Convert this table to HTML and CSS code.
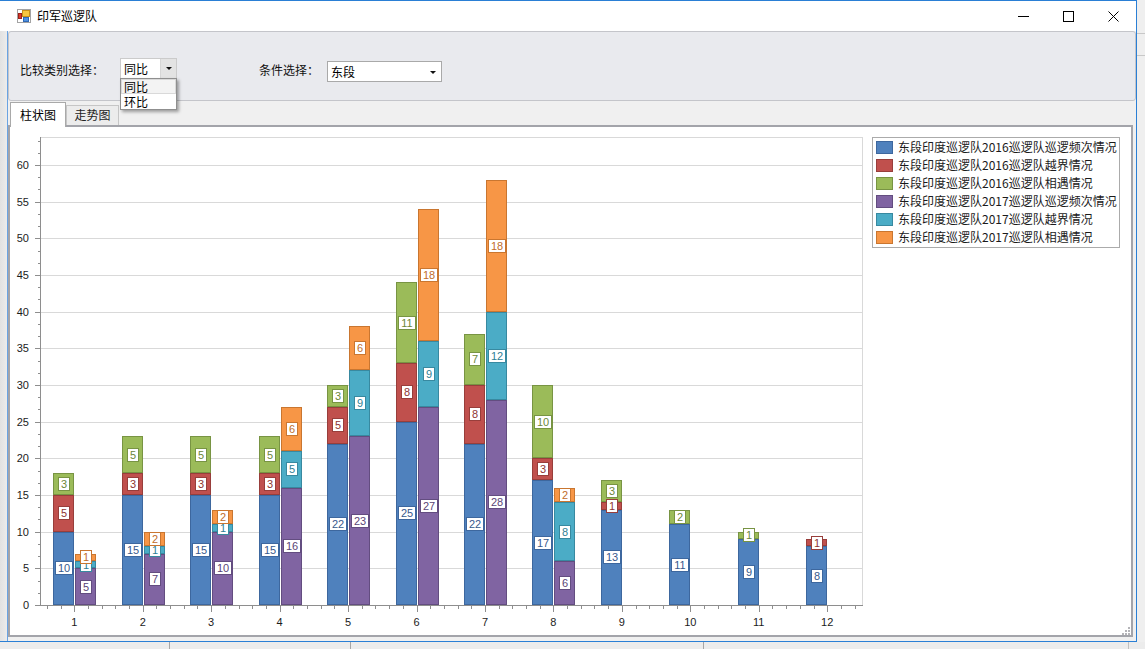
FILE: index.html
```html
<!DOCTYPE html>
<html lang="zh-CN">
<head>
<meta charset="utf-8">
<title>印军巡逻队</title>
<link rel="stylesheet" href="styles.css">
</head>
<body>
<div class="screen">
  <div class="top-row">
    <div class="window">
      <div class="titlebar">
        <svg class="app-icon" viewBox="0 0 14 14" width="14" height="14">
          <rect x="0.5" y="0.5" width="13" height="13" fill="#fff" stroke="#a3a3a3"/>
          <rect x="5.5" y="1.5" width="7" height="6" fill="#f7c640" stroke="#c8901a"/>
          <rect x="1.5" y="4.5" width="3" height="5" fill="#d93a2c" stroke="#9c2018"/>
          <rect x="6.5" y="8.5" width="5" height="4" fill="#4f92e2" stroke="#2f68b5"/>
        </svg>
        <span class="title">印军巡逻队</span>
        <div class="controls">
          <span class="ctl"><svg width="11" height="11" viewBox="0 0 11 11"><rect x="0" y="5" width="11" height="1" fill="#000"/></svg></span>
          <span class="ctl"><svg width="11" height="11" viewBox="0 0 11 11"><rect x="0.5" y="0.5" width="10" height="10" fill="none" stroke="#000"/></svg></span>
          <span class="ctl"><svg width="11" height="11" viewBox="0 0 11 11"><path d="M0.5 0.5 L10.5 10.5 M10.5 0.5 L0.5 10.5" stroke="#000" stroke-width="1" fill="none"/></svg></span>
        </div>
      </div>
      <div class="client">
        <div class="gutter"></div>
        <div class="main">
          <div class="panel">
            <span class="lbl lbl-type">比较类别选择：</span>
            <div class="combo combo-type">
              <span class="combo-text">同比</span>
              <span class="combo-btn"><i class="arrow"></i></span>
              <ul class="dropdown">
                <li class="item hot">同比</li>
                <li class="item">环比</li>
              </ul>
            </div>
            <span class="lbl lbl-cond">条件选择：</span>
            <div class="combo combo-cond">
              <span class="combo-text">东段</span>
              <i class="arrow"></i>
            </div>
          </div>
          <div class="tabs">
            <div class="tabstrip">
              <div class="tab active">柱状图</div>
              <div class="tab">走势图</div>
            </div>
            <div class="tabpage">
              <svg id="chart" class="chart" width="1121" height="508" viewBox="10 127 1121 508"></svg>
            </div>
          </div>
        </div>
      </div>
    </div>
    <div class="side-strip"><div class="side-lines"></div></div>
  </div>
  <div class="bottom-row">
    <div class="cell w1"></div>
    <div class="cell w2"></div>
    <div class="cell w3"></div>
    <div class="cell w4"></div>
    <div class="cell w5"></div>
  </div>
</div>
<script src="script.js"></script>
</body>
</html>
```

FILE: styles.css
```css
* { box-sizing: border-box; }
html, body { margin: 0; padding: 0; }
body {
  width: 1145px;
  height: 649px;
  overflow: hidden;
  background: #ededed;
  font-family: "Noto Sans CJK SC", "Noto Sans", sans-serif;
  font-size: 12px;
  color: #000;
}
.screen {
  width: 1145px;
  height: 649px;
  display: flex;
  flex-direction: column;
  background: #ededed;
}
.top-row { display: flex; height: 642px; flex: none; }
.window {
  width: 1137px;
  height: 642px;
  flex: none;
  border-top: 1px solid #2a7fd5;
  border-right: 1px solid #2a7fd5;
  border-bottom: 1px solid #2a7fd5;
  background: #f0f0f0;
  display: flex;
  flex-direction: column;
  box-shadow: 0 2px 4px rgba(0,0,0,0.12);
}
.titlebar {
  height: 30px;
  flex: none;
  background: #fff;
  display: flex;
  align-items: center;
}
.app-icon { margin-left: 17px; margin-right: 6px; flex: none; display: block; }
.title { font-size: 12px; line-height: 16px; color: #000; }
.controls { margin-left: auto; display: flex; height: 30px; }
.ctl {
  width: 45px;
  height: 30px;
  display: flex;
  align-items: center;
  justify-content: center;
}
.ctl svg { display: block; }

.client { flex: 1; display: flex; min-height: 0; }
.gutter {
  width: 8px;
  flex: none;
  background: linear-gradient(to right, #e2e2e2, #ececec);
  border-right: 1px solid #6aa3e2;
}
.main { flex: 1; display: flex; flex-direction: column; min-width: 0; }

.panel {
  height: 70px;
  flex: none;
  background: #e9eaee;
  border: 1px solid #c4c5ca;
  border-radius: 3px;
  display: flex;
  align-items: flex-start;
  padding-left: 11px;
  position: relative;
  z-index: 3;
}
.lbl { font-size: 12px; line-height: 20px; white-space: nowrap; color: #111; }
.lbl-type { margin-top: 28px; width: 84px; }
.lbl-cond { margin-top: 28px; margin-left: 82px; width: 60px; }

.combo {
  position: relative;
  display: flex;
  align-items: stretch;
  background: #fff;
  height: 21px;
  font-size: 12px;
}
.combo-text { line-height: 19px; padding-left: 3px; flex: 1; color: #000; }
.combo-type {
  margin-top: 26px;
  margin-left: 16px;
  width: 57px;
  border: 1px solid #cbcbcb;
}
.combo-btn {
  width: 16px;
  background: #e3e3e3;
  border-left: 1px solid #d6d6d6;
  display: flex;
  align-items: center;
  justify-content: center;
}
.arrow {
  display: block;
  width: 0;
  height: 0;
  border-left: 3px solid transparent;
  border-right: 3px solid transparent;
  border-top: 3px solid #111;
}
.combo-cond {
  margin-top: 29px;
  margin-left: 8px;
  width: 115px;
  border: 1px solid #a9a9a9;
  align-items: center;
}
.combo-cond .arrow { margin-right: 5px; margin-top: 1px; }
.combo-cond .combo-text { align-self: stretch; }

.dropdown {
  position: absolute;
  left: -1px;
  top: 100%;
  width: 57px;
  margin: 0;
  padding: 0;
  list-style: none;
  background: #fff;
  border: 1px solid #8f8f8f;
  box-shadow: 2px 2px 3px rgba(0,0,0,0.35);
  z-index: 5;
}
.item { height: 15px; line-height: 15px; padding-left: 3px; font-size: 12px; color: #000; }
.item.hot { background: #f3f3f3; outline: 1px solid #d9d9d9; outline-offset: -1px; }

.tabs { margin-top: 1px; width: 1125px; display: flex; flex-direction: column; flex: none; }
.tabstrip {
  height: 23px;
  display: flex;
  align-items: flex-end;
  padding-left: 2px;
  position: relative;
  z-index: 2;
}
.tab {
  width: 53px;
  height: 20px;
  background: #ececec;
  border: 1px solid #c6c6c6;
  border-bottom: none;
  text-align: center;
  line-height: 18px;
  font-size: 12px;
  color: #222;
}
.tab.active {
  width: 56px;
  height: 25px;
  margin-bottom: -2px;
  background: #fff;
  border-color: #a9a9a9;
  line-height: 23px;
  color: #000;
}
.tabpage {
  height: 512px;
  border: 2px solid #a3a4aa;
  background: #fff;
}
.chart { display: block; }

.side-strip { flex: 1; background: #efefef; }
.side-lines {
  margin-top: 33px;
  height: 23px;
  border-top: 1px solid #c8c8c8;
  border-bottom: 1px solid #c8c8c8;
}
.bottom-row { flex: 1; display: flex; background: #ececec; }
.cell { height: 100%; }
.w1 { width: 169px; }
.w2 { width: 181px; border-left: 1px solid #a6a6a6; }
.w3 { width: 353px; border-left: 1px solid #a6a6a6; }
.w4 { width: 425px; border-left: 1px solid #a6a6a6; }
.w5 { flex: 1; border-left: 1px solid #c0c0c0; }

/* chart parts */
.grid { stroke: #d9d9d9; stroke-width: 1; }
.axis { stroke: #8e8e8e; stroke-width: 1; }
.ax-lbl { font-family: "Liberation Sans", Arial, sans-serif; font-size: 11px; fill: #1b1b1b; }
.bar-lbl { font-family: "Liberation Sans", Arial, sans-serif; font-size: 11px; }
.legend-box { fill: #fff; stroke: #ababab; stroke-width: 1; }
.legend-text { font-family: "Noto Sans CJK SC", "Noto Sans", sans-serif; font-size: 12px; fill: #1b1b1b; }
.grip { fill: #b4b4b8; }
```

FILE: script.js
```js
(function () {
  var NS = 'http://www.w3.org/2000/svg';
  var svg = document.getElementById('chart');
  function mk(tag, attrs, text) {
    var e = document.createElementNS(NS, tag);
    for (var k in attrs) e.setAttribute(k, attrs[k]);
    if (text != null) e.textContent = text;
    svg.appendChild(e);
    return e;
  }
  var Y0 = 605, K = 440 / 60, L = 40, R = 862, T = 137, STEP = 68.45, C0 = 74.25;
  function yv(v) { return Y0 - v * K; }

  var S = [
    { f: '#4f81bd', s: '#3d679e', t: '#37598c', name: '东段印度巡逻队2016巡逻队巡逻频次情况' },
    { f: '#c0504d', s: '#983e3b', t: '#8e3533', name: '东段印度巡逻队2016巡逻队越界情况' },
    { f: '#9bbb59', s: '#789443', t: '#6c873a', name: '东段印度巡逻队2016巡逻队相遇情况' },
    { f: '#8064a2', s: '#634d80', t: '#5a4576', name: '东段印度巡逻队2017巡逻队巡逻频次情况' },
    { f: '#4bacc6', s: '#3889a0', t: '#2f7f95', name: '东段印度巡逻队2017巡逻队越界情况' },
    { f: '#f79646', s: '#c97630', t: '#bf6d2a', name: '东段印度巡逻队2017巡逻队相遇情况' }
  ];
  var D = [
    [10, 5, 3, 5, 1, 1], [15, 3, 5, 7, 1, 2], [15, 3, 5, 10, 1, 2], [15, 3, 5, 16, 5, 6],
    [22, 5, 3, 23, 9, 6], [25, 8, 11, 27, 9, 18], [22, 8, 7, 28, 12, 18], [17, 3, 10, 6, 8, 2],
    [13, 1, 3, 0, 0, 0], [11, 0, 2, 0, 0, 0], [9, 0, 1, 0, 0, 0], [8, 1, 0, 0, 0, 0]
  ];

  // grid
  mk('line', { x1: L, y1: T + 0.5, x2: R + 1, y2: T + 0.5, 'class': 'grid' });
  mk('line', { x1: R + 0.5, y1: T, x2: R + 0.5, y2: Y0, 'class': 'grid' });
  for (var v = 5; v <= 60; v += 5) {
    var gy = Math.round(yv(v)) + 0.5;
    mk('line', { x1: L, y1: gy, x2: R, y2: gy, 'class': 'grid' });
  }

  // bars
  var labels = [];
  for (var i = 0; i < D.length; i++) {
    var c = C0 + STEP * i;
    var bars = [
      { x: Math.round(c - 21), w: Math.round(c) - Math.round(c - 21), s: 0 },
      { x: Math.round(c) + 1, w: 21, s: 3 }
    ];
    for (var b = 0; b < 2; b++) {
      var bar = bars[b], cum = 0;
      for (var j = 0; j < 3; j++) {
        var val = D[i][bar.s + j];
        if (!val) continue;
        var ser = S[bar.s + j];
        var top = Math.round(yv(cum + val)), bot = Math.round(yv(cum));
        mk('rect', {
          x: bar.x + 0.5, y: top + 0.5, width: bar.w - 1, height: Math.max(bot - top - 1, 0.5),
          fill: ser.f, stroke: ser.s, 'stroke-width': 1
        });
        labels.push({ cx: bar.x + bar.w / 2, cy: yv(cum + val / 2), v: val, ser: ser });
        cum += val;
      }
    }
  }

  // axes
  mk('line', { x1: L + 0.5, y1: T, x2: L + 0.5, y2: Y0 + 1, 'class': 'axis' });
  mk('line', { x1: L, y1: Y0 + 0.5, x2: R + 1, y2: Y0 + 0.5, 'class': 'axis' });
  for (var n = 0; n <= 38; n++) {
    var ty = Math.round(yv(n * 5 / 3)) + 0.5;
    var major = (n % 3 === 0);
    mk('line', { x1: major ? 35 : 38, y1: ty, x2: L, y2: ty, 'class': 'axis' });
    if (major) {
      mk('text', { x: 29, y: Math.round(yv(n * 5 / 3)) + 4, 'text-anchor': 'end', 'class': 'ax-lbl' }, String(n * 5 / 3));
    }
  }
  for (var k = -2; k < 60; k++) {
    var tx = C0 + STEP / 5 * k;
    if (tx > R + 0.5) break;
    var mj = (k % 5 === 0);
    var px = Math.round(tx) + 0.5;
    mk('line', { x1: px, y1: Y0, x2: px, y2: Y0 + (mj ? 7 : 4), 'class': 'axis' });
    if (mj) {
      mk('text', { x: tx, y: 626, 'text-anchor': 'middle', 'class': 'ax-lbl' }, String(k / 5 + 1));
    }
  }

  // bar labels
  for (var m = 0; m < labels.length; m++) {
    var lb = labels[m];
    var txt = String(lb.v);
    var bw = txt.length > 1 ? 18 : 12;
    var bx = Math.round(lb.cx - bw / 2);
    var by = Math.round(lb.cy - 7);
    mk('rect', { x: bx + 0.5, y: by + 0.5, width: bw - 1, height: 13, fill: '#fff', stroke: lb.ser.s, 'stroke-width': 1 });
    mk('text', { x: bx + bw / 2, y: by + 11, 'text-anchor': 'middle', 'class': 'bar-lbl', fill: lb.ser.t }, txt);
  }

  // legend
  mk('rect', { x: 872.5, y: 137.5, width: 247, height: 110, 'class': 'legend-box' });
  for (var q = 0; q < S.length; q++) {
    var ry = 141 + Math.round(17.93 * q);
    mk('rect', { x: 876.5, y: ry + 0.5, width: 16, height: 12, fill: S[q].f, stroke: S[q].s, 'stroke-width': 1 });
    mk('text', { x: 898, y: ry + 11, 'class': 'legend-text' }, S[q].name);
  }

  // resize grip
  var dots = [[1128, 627], [1125, 630], [1128, 630], [1122, 633], [1125, 633], [1128, 633]];
  for (var d = 0; d < dots.length; d++) {
    mk('rect', { x: dots[d][0], y: dots[d][1], width: 2, height: 2, 'class': 'grip' });
  }
})();
```
